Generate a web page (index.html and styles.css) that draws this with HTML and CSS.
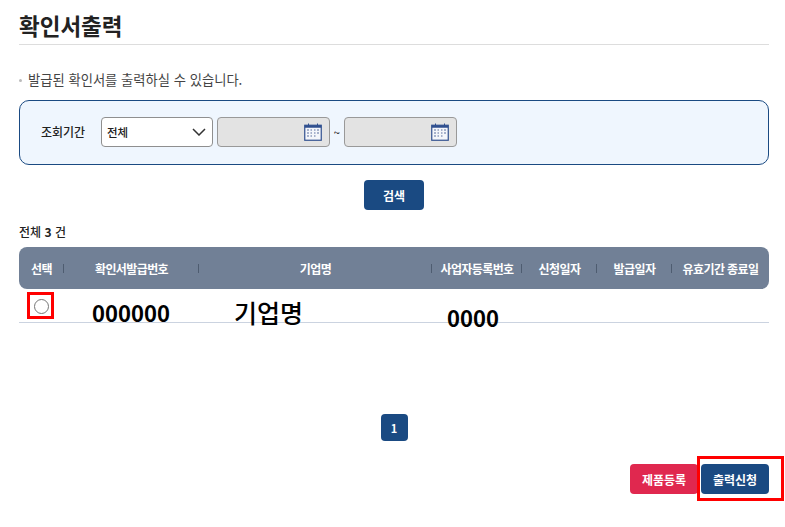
FILE: index.html
```html
<!DOCTYPE html>
<html lang="ko">
<head>
<meta charset="utf-8">
<title>확인서출력</title>
<link rel="stylesheet" href="styles.css">
</head>
<body>
<main class="page">
  <h1 class="title">확인서출력</h1>
  <p class="notice"><span class="dot"></span>발급된 확인서를 출력하실 수 있습니다.</p>
  <section class="filter">
    <span class="filter-label">조회기간</span>
    <div class="select">
      <span>전체</span>
      <svg class="chev" width="14" height="8" viewBox="0 0 14 8"><path d="M1 1l6 6 6-6" fill="none" stroke="#333" stroke-width="1.5"/></svg>
    </div>
    <div class="date">
      <svg class="cal" width="18" height="18" viewBox="0 0 18 18"><use href="#cal"/></svg>
    </div>
    <span class="tilde">~</span>
    <div class="date">
      <svg class="cal" width="18" height="18" viewBox="0 0 18 18"><use href="#cal"/></svg>
    </div>
  </section>
  <div class="search-row"><button class="btn navy search">검색</button></div>
  <p class="count">전체 <b>3</b> 건</p>
  <div class="table">
    <div class="thead">
      <div class="th">선택</div>
      <div class="th">확인서발급번호</div>
      <div class="th">기업명</div>
      <div class="th">사업자등록번호</div>
      <div class="th">신청일자</div>
      <div class="th">발급일자</div>
      <div class="th">유효기간 종료일</div>
    </div>
    <div class="row">
      <span class="radio-mark"><span class="radio"></span></span>
      <span class="big num-a">000000</span>
      <span class="big name-a">기업명</span>
      <span class="big num-b">0000</span>
    </div>
  </div>
  <nav class="pager"><button class="page-btn">1</button></nav>
  <div class="actions">
    <button class="btn red">제품등록</button>
    <span class="action-mark"><button class="btn navy">출력신청</button></span>
  </div>
</main>
<svg class="defs" width="0" height="0">
  <symbol id="cal" viewBox="0 0 18 18">
    <rect x="0.75" y="2.25" width="16.5" height="15" fill="#f4f6fb" stroke="#2f4f8f" stroke-width="1.2"/>
    <rect x="0.75" y="2.25" width="16.5" height="2.5" fill="#2f4f8f"/>
    <path d="M4.5 0.5v3M13.5 0.5v3" stroke="#2f4f8f" stroke-width="1"/>
    <path d="M3 7h2M6.5 7h1.5M10 7h1.5M13 7h2M3 10h2M6.5 10h1.5M10 10h1.5M13 10h2M3 13h2M6.5 13h1.5M10 13h1.5" stroke="#5a6e9e" stroke-width="1.2"/>
  </symbol>
</svg>
</body>
</html>
```
FILE: styles.css
```css
*, *::before, *::after { box-sizing: border-box; }
html, body { margin: 0; padding: 0; background: #fff; }
body { font-family: "Noto Sans CJK KR", "Noto Sans", sans-serif; color: #222; height: 527px; overflow: hidden; }
.page { margin-left: 19px; width: 750px; display: flex; flex-direction: column; }
.title { margin: 0; padding-top: 8px; height: 45px; font-size: 22.5px; line-height: 34px; font-weight: 700; color: #222; border-bottom: 1px solid #ddd; }
.notice { margin: 25px 0 0; height: 20px; font-size: 13.3px; line-height: 20px; color: #444; display: flex; align-items: center; }
.dot { width: 3px; height: 3px; border-radius: 50%; background: #bbb; margin-right: 6px; }
.filter { margin-top: 10px; height: 65px; background: #eff6fe; border: 1px solid #1a4a82; border-radius: 10px; display: flex; align-items: center; padding: 0 0 2px 21px; }
.filter-label { width: 60px; font-size: 12px; font-weight: 500; color: #222; }
.select { width: 112px; height: 30px; background: #fff; border: 1px solid #8f8f8f; border-radius: 4px; display: flex; align-items: center; justify-content: space-between; padding: 0 6px 0 5px; font-size: 11.5px; font-weight: 500; margin-right: 4px; }
.chev { display: block; }
.date { width: 113px; height: 30px; background: #e3e3e3; border: 1px solid #999; border-radius: 4px; display: flex; align-items: center; justify-content: flex-end; padding-right: 7px; }
.cal { display: block; }
.tilde { width: 14px; text-align: center; font-size: 11px; font-weight: 500; color: #222; }
.search-row { margin-top: 15px; display: flex; justify-content: center; }
.btn { border: 0; border-radius: 4px; height: 30px; font-family: inherit; font-size: 12px; font-weight: 700; color: #fff; padding: 0; }
.navy { background: #1a4a82; }
.red { background: #e0284f; }
.search { width: 60px; }
.count { margin: 13px 0 0; height: 18px; font-size: 12px; line-height: 18px; font-weight: 500; color: #222; }
.count b { font-weight: 700; }
.table { margin-top: 6px; }
.thead { height: 42px; background: #718096; border-radius: 8px; display: grid; grid-template-columns: 45px 135px 233px 90px 75px 75px 97px; align-items: center; }
.th { position: relative; text-align: center; font-size: 12px; font-weight: 700; color: #fff; letter-spacing: -0.6px; white-space: nowrap; }
.th:not(:last-child)::after { content: ""; position: absolute; right: 0; top: 50%; width: 1px; height: 9px; margin-top: -4px; background: #4e5c70; }
.row { position: relative; height: 34px; border-bottom: 1px solid #cbd3e0; }
.radio-mark { position: absolute; left: 8px; top: 3px; width: 27px; height: 27px; border: 3px solid #f00; display: flex; align-items: center; justify-content: center; padding: 2px 0 0 2px; }
.radio { width: 15px; height: 15px; flex: none; border: 1px solid #767676; border-radius: 50%; background: #fff; }
.big { position: absolute; color: #000; white-space: nowrap; font-weight: 700; font-size: 22px; line-height: 30px; }
.num-a { left: 73px; top: 8px; }
.name-a { left: 215px; top: 8px; font-size: 25px; font-weight: 500; }
.num-b { left: 428px; top: 13px; }
.pager { margin-top: 91px; display: flex; justify-content: center; }
.page-btn { width: 27px; height: 27px; border: 0; border-radius: 4px; background: #1a4a82; color: #fff; font-family: inherit; font-size: 11px; font-weight: 700; padding: 0; }
.actions { margin-top: 23px; display: flex; justify-content: flex-end; gap: 3px; }
.actions .btn { width: 68px; }
.action-mark { position: relative; display: block; height: 30px; }
.action-mark .btn { display: block; }
.action-mark::after { content: ""; position: absolute; left: -4px; top: -8px; width: 87px; height: 45px; border: 3px solid #f00; }
.defs { position: absolute; }
```
